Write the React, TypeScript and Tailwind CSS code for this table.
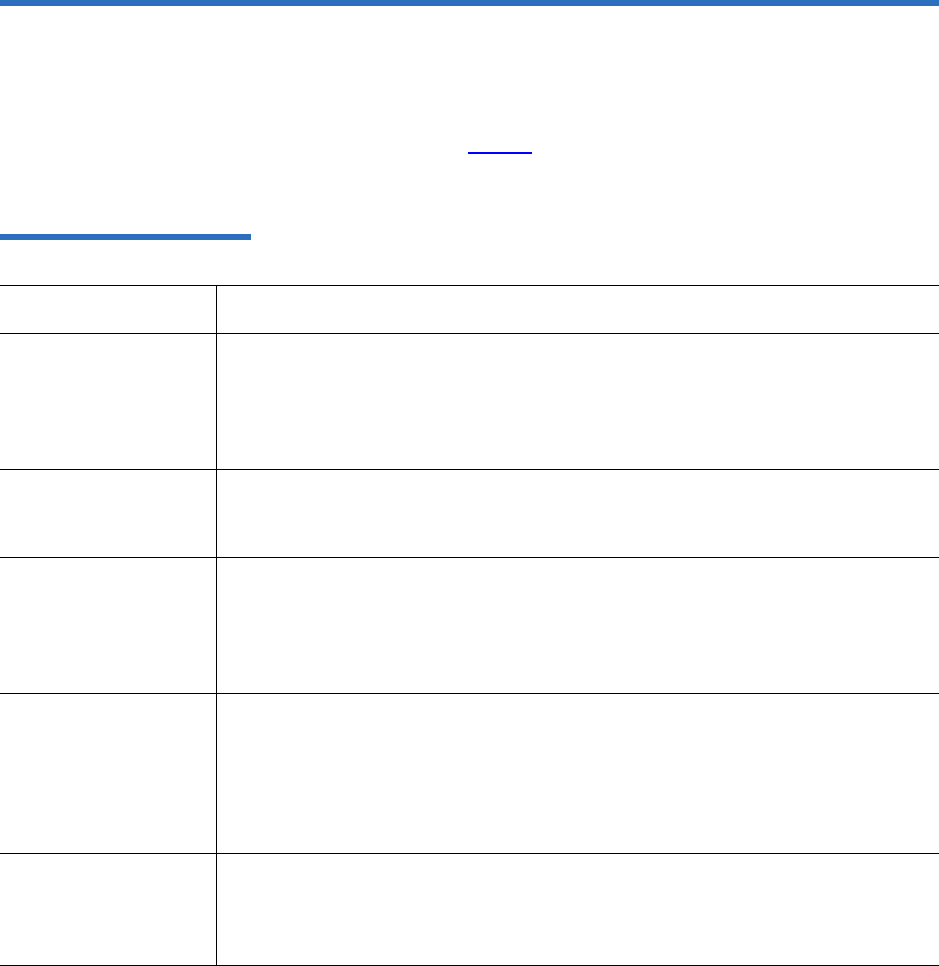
const rows = [48, 136, 88, 136, 160, 112]

export default function App() {
  return (
    <div className="min-h-[966px] w-[939px] bg-white" style={{ fontFamily: '"Liberation Sans", Arial, sans-serif' }}>
      {/* top rule */}
      <div className="h-[6px] w-full bg-[#2b6fbe]" />

      {/* intro paragraph with link */}
      <div className="pt-[146px]">
        <div className="ml-[468px] h-[2px] w-[64px] bg-[#0000ff]" />
        {/* section heading bar */}
        <div className="mt-[80px] h-[6px] w-[251px] bg-[#2b6fbe]" />
      </div>

      {/* table */}
      <div className="mt-[45px] border-t border-black">
        {rows.map((h, i) => (
          <div key={i} className="flex border-b border-black" style={{ height: h }}>
            <div className="w-[217px] border-r border-black" />
            <div className="flex-1" />
          </div>
        ))}
      </div>
    </div>
  )
}
